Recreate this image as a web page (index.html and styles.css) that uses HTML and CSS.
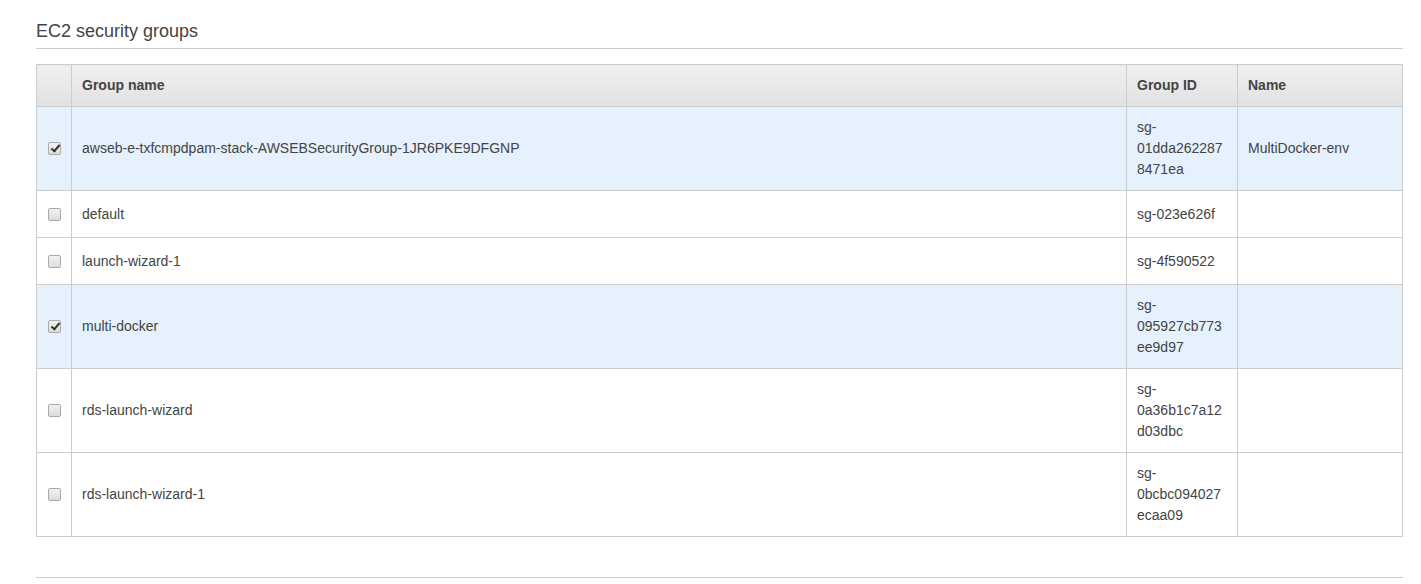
FILE: index.html
```html
<!doctype html>
<html lang="en">
<head>
    <meta charset="utf-8">
    <title>EC2 security groups</title>
    <link rel="stylesheet" href="styles.css">
</head>
<body>
    <div class="section">
        <h2 class="section-title">EC2 security groups</h2>

        <table class="sg-table">
            <colgroup>
                <col class="col-check">
                <col class="col-name">
                <col class="col-id">
                <col class="col-tag">
            </colgroup>
            <thead>
                <tr>
                    <th></th>
                    <th>Group name</th>
                    <th>Group ID</th>
                    <th>Name</th>
                </tr>
            </thead>
            <tbody>
                <tr class="selected">
                    <td class="cell-check"><input type="checkbox" class="check" checked></td>
                    <td>awseb-e-txfcmpdpam-stack-AWSEBSecurityGroup-1JR6PKE9DFGNP</td>
                    <td class="cell-id">sg-01dda2622878471ea</td>
                    <td>MultiDocker-env</td>
                </tr>
                <tr>
                    <td class="cell-check"><input type="checkbox" class="check"></td>
                    <td>default</td>
                    <td class="cell-id">sg-023e626f</td>
                    <td></td>
                </tr>
                <tr>
                    <td class="cell-check"><input type="checkbox" class="check"></td>
                    <td>launch-wizard-1</td>
                    <td class="cell-id">sg-4f590522</td>
                    <td></td>
                </tr>
                <tr class="selected">
                    <td class="cell-check"><input type="checkbox" class="check" checked></td>
                    <td>multi-docker</td>
                    <td class="cell-id">sg-095927cb773ee9d97</td>
                    <td></td>
                </tr>
                <tr>
                    <td class="cell-check"><input type="checkbox" class="check"></td>
                    <td>rds-launch-wizard</td>
                    <td class="cell-id">sg-0a36b1c7a12d03dbc</td>
                    <td></td>
                </tr>
                <tr>
                    <td class="cell-check"><input type="checkbox" class="check"></td>
                    <td>rds-launch-wizard-1</td>
                    <td class="cell-id">sg-0bcbc094027ecaa09</td>
                    <td></td>
                </tr>
            </tbody>
        </table>

        <div class="section-end"></div>
    </div>
</body>
</html>
```

FILE: styles.css
```css
* {
    box-sizing: border-box;
}
body {
    margin: 0;
    background-color: #fff;
    font-family: "Liberation Sans", Arial, sans-serif;
    font-size: 14px;
    color: #444;
}
.section {
    width: 1367px;
    margin-left: 36px;
    padding-top: 20px;
}
.section-title {
    margin: 0;
    font-size: 18px;
    font-weight: normal;
    line-height: 22px;
    padding-bottom: 6px;
    border-bottom: 1px solid #ccc;
}
.sg-table {
    margin-top: 15px;
    width: 1367px;
    table-layout: fixed;
    border-collapse: collapse;
    border: 1px solid #ccc;
}
.col-check {
    width: 35px;
}
.col-id {
    width: 111px;
}
.col-tag {
    width: 165px;
}
.sg-table th,
.sg-table td {
    border: 1px solid #ccc;
    padding: 10px;
    line-height: 21px;
    text-align: left;
    vertical-align: middle;
}
.sg-table th {
    font-weight: bold;
    background: linear-gradient(#f0f0f0, #e1e1e1);
}
.sg-table tbody tr {
    height: 47px;
}
.sg-table tr.selected td {
    background-color: #e5f1fc;
}
.cell-id {
    overflow-wrap: break-word;
}
.sg-table td.cell-check {
    padding: 0;
    text-align: center;
}
.check {
    appearance: none;
    -webkit-appearance: none;
    position: relative;
    display: inline-block;
    width: 13px;
    height: 13px;
    margin: 0 0 1px 0;
    vertical-align: middle;
    border: 1px solid #aaa;
    border-radius: 2px;
    background: linear-gradient(#f2f2f2, #dcdcdc);
}
.check:checked::after {
    content: "";
    position: absolute;
    left: 4px;
    top: 0px;
    width: 3px;
    height: 7px;
    border-right: 2px solid #333;
    border-bottom: 2px solid #333;
    transform: rotate(40deg);
}
.section-end {
    margin-top: 40px;
    border-top: 1px solid #ccc;
}
```
